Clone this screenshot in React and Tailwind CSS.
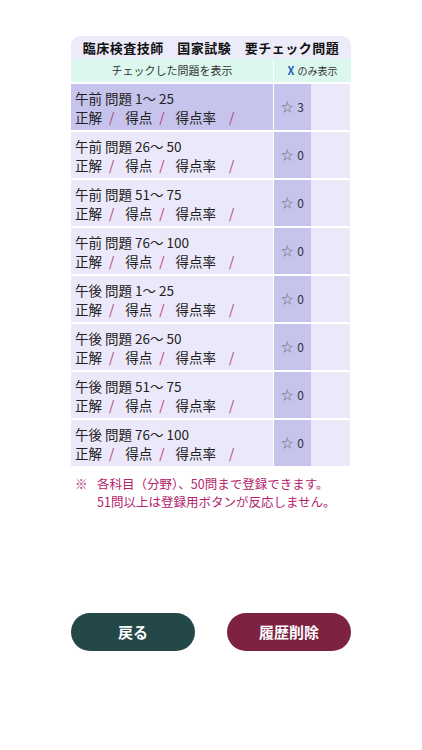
import React from "react";

const rows = [
  { label: "午前 問題 1〜 25", count: 3, active: true },
  { label: "午前 問題 26〜 50", count: 0 },
  { label: "午前 問題 51〜 75", count: 0 },
  { label: "午前 問題 76〜 100", count: 0 },
  { label: "午後 問題 1〜 25", count: 0 },
  { label: "午後 問題 26〜 50", count: 0 },
  { label: "午後 問題 51〜 75", count: 0 },
  { label: "午後 問題 76〜 100", count: 0 },
];

function Slash() {
  return <span className="text-[#b03a78] ml-[7px] mr-[11px]">/</span>;
}

function Row({ r }) {
  return (
    <div className="flex h-[46px]">
      <div
        className={`w-[202px] pl-[4px] pt-[5px] text-[13.5px] leading-[19px] text-[#222] ${
          r.active ? "bg-[#c6c3ed]" : "bg-[#ebe9f9]"
        }`}
      >
        <div className="whitespace-pre">{r.label}</div>
        <div className="whitespace-pre">
          正解<Slash />得点<Slash />得点率<span className="inline-block w-[13px]" />
          <span className="text-[#b03a78]">/</span>
        </div>
      </div>
      <div className="w-[1px] bg-white" />
      <div className="w-[37px] bg-[#c6c3ed] flex items-center justify-center text-[12px] text-[#333]">
        <span className="text-[#666] mr-[4px]">☆</span>
        {r.count}
      </div>
      <div className="w-[39px] bg-[#ebe9f9]" />
    </div>
  );
}

export default function App() {
  return (
    <div
      className="w-[422px] h-[750px] bg-white"
      style={{ fontFamily: '"Noto Sans CJK JP", "Noto Sans", sans-serif' }}
    >
      <div className="pt-[36px] pl-[71px] w-[351px]">
        <div className="w-[280px]">
          <div className="h-[23px] rounded-t-[9px] bg-[#ecebf9] flex items-center justify-center text-[13px] font-bold text-[#111] tracking-[0.5px]">
            臨床検査技師　国家試験　要チェック問題
          </div>
          <div className="flex h-[23px] text-[11px] text-[#333]">
            <div className="w-[202px] bg-[#dcf8ee] flex items-center justify-center">
              チェックした問題を表示
            </div>
            <div className="w-[1px] bg-white" />
            <div className="flex-1 bg-[#dcf8ee] flex items-center justify-center text-[10px]">
              <span className="text-[#1f5fc0] font-bold mr-[3px] text-[11px]">X</span>のみ表示
            </div>
          </div>
          <div className="flex flex-col gap-[2px] mt-[2px]">
            {rows.map((r, i) => (
              <Row key={i} r={r} />
            ))}
          </div>
          <div className="mt-[9px] text-[12.5px] leading-[18px] text-[#b3236c] flex">
            <span className="w-[26px] pl-[4px]">※</span>
            <div>
              <div>各科目（分野）、50問まで登録できます。</div>
              <div>51問以上は登録用ボタンが反応しません。</div>
            </div>
          </div>
        </div>
      </div>
      <div className="flex gap-[32px] pl-[71px] mt-[102px]">
        <button className="w-[124px] h-[38px] rounded-full bg-[#244747] text-white text-[15px] font-bold">
          戻る
        </button>
        <button className="w-[124px] h-[38px] rounded-full bg-[#7d2240] text-white text-[15px] font-bold">
          履歴削除
        </button>
      </div>
    </div>
  );
}
